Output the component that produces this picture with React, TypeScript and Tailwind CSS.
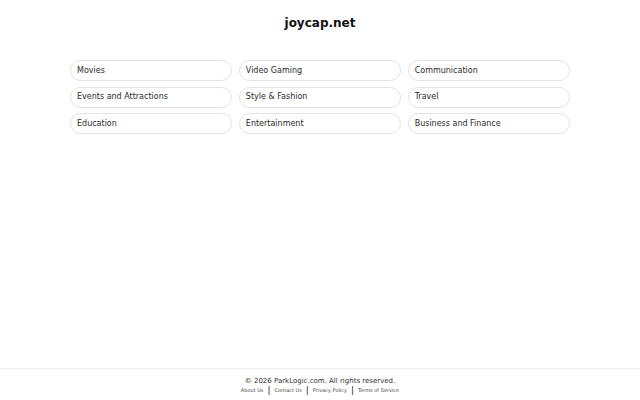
const categories = [
  'Movies',
  'Video Gaming',
  'Communication',
  'Events and Attractions',
  'Style & Fashion',
  'Travel',
  'Education',
  'Entertainment',
  'Business and Finance',
];

const links = ['About Us', 'Contact Us', 'Privacy Policy', 'Terms of Service'];

export default function App() {
  return (
    <div className="min-h-screen flex flex-col bg-white text-[#222] font-['DejaVu_Sans',sans-serif]">
      <main className="flex-1">
        <h1 className="text-[12px] font-bold text-center text-[#111] pt-[16px] leading-[14px]">joycap.net</h1>

        <div className="w-[500px] mx-auto mt-[30px] grid grid-cols-3 gap-x-[6.5px] gap-y-[5.5px]">
          {categories.map((c) => (
            <a
              key={c}
              href="#"
              className="h-[21px] flex items-center px-[6px] rounded-full border border-[#e3e3e3] text-[8px] text-[#2a2a2a]"
            >
              {c}
            </a>
          ))}
        </div>
      </main>

      <footer className="border-t border-[#efefef] h-[32px] flex flex-col items-center pt-[8px]">
        <p className="text-[7px] leading-[9px] text-[#333]">© 2026 ParkLogic.com. All rights reserved.</p>
        <div className="flex items-center text-[5px] text-[#444] leading-[9px]">
          {links.map((l, i) => (
            <span key={l} className="flex items-center">
              {i > 0 && <span className="text-[9px] mx-[4px] text-[#222]">|</span>}
              <a href="#">{l}</a>
            </span>
          ))}
        </div>
      </footer>
    </div>
  );
}
